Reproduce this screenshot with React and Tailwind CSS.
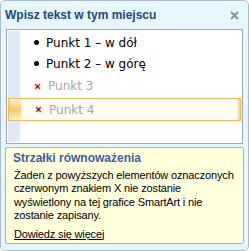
const items = [
  { text: 'Punkt 1 – w dół', on: true, h: 'h-[21px]' },
  { text: 'Punkt 2 – w górę', on: true, h: 'h-[21px]' },
  { text: 'Punkt 3', on: false, h: 'h-[24px]' },
  { text: 'Punkt 4', on: false, selected: true },
];

const rowFont = { fontFamily: '"DejaVu Sans", Verdana, sans-serif' };

const RedX = () => (
  <svg width="7" height="7" viewBox="0 0 7 7" className="shrink-0">
    <path d="M1 1L6 6M6 1L1 6" stroke="#d23a3a" strokeWidth="1.6" />
    <rect x="2.5" y="2.5" width="2" height="2" fill="#7a1010" />
  </svg>
);

const Row = ({ item }) => {
  const bullet = item.on ? (
    <span className="w-[5px] h-[5px] rounded-full bg-black shrink-0" />
  ) : (
    <RedX />
  );

  if (item.selected) {
    return (
      <div className="flex h-[23px] border border-[#f6b95a] bg-[#fffdf4]">
        <div className="w-[12px] bg-linear-to-b from-[#fff2cf] via-[#fdc864] to-[#fff2cf]" />
        <div className="flex-1 flex items-center gap-[7px] pl-[14px]">
          {bullet}
          <span className="text-[12px] whitespace-nowrap text-[#a8a8a8]" style={rowFont}>
            {item.text}
          </span>
        </div>
        <div className="w-[3px] bg-linear-to-r from-[#fffdf4] to-[#fbc46a]" />
      </div>
    );
  }

  return (
    <div className={`flex items-center gap-[7px] pl-[26px] ${item.h}`}>
      {bullet}
      <span
        className={`text-[12px] whitespace-nowrap ${item.on ? 'text-black' : 'text-[#a8a8a8]'}`}
        style={rowFont}
      >
        {item.text}
      </span>
    </div>
  );
};

export default function App() {
  return (
    <div
      className="w-[249px] h-[251px] bg-[#e6f7fc] border border-[#a9bccd] rounded-[5px] flex flex-col"
      style={{ fontFamily: '"Liberation Sans", Arial, sans-serif' }}
    >
      {/* header */}
      <div className="h-[28px] flex items-center justify-between pl-[4px] pr-[9px]">
        <span className="text-[12px] font-bold text-[#1b4b80]">Wpisz tekst w tym miejscu</span>
        <svg width="9" height="9" viewBox="0 0 9 9">
          <path d="M1 1L8 8M8 1L1 8" stroke="#8a9099" strokeWidth="2" />
        </svg>
      </div>

      {/* text pane */}
      <div className="mx-[5px] h-[115px] border border-[#a7a7a7] bg-white p-px">
        <div className="h-full pt-[1px] bg-[linear-gradient(to_right,#dfe9f7_12px,#ffffff_12px)]">
          {items.map((it) => (
            <Row key={it.text} item={it} />
          ))}
        </div>
      </div>

      {/* info panel */}
      <div className="mx-[4px] mt-[3px] h-[97px] border border-[#93b7de] rounded-[2px] bg-[#ffffde] pl-[7px] pr-[4px] pt-[4px] text-[11px] leading-[13.5px] text-black">
        <div className="font-bold text-[#3d5f9e] text-[12px] mb-[3px]">Strzałki równoważenia</div>
        <p className="pl-px whitespace-nowrap tracking-[-0.15px]">
          Żaden z powyższych elementów oznaczonych
          <br />
          czerwonym znakiem X nie zostanie
          <br />
          wyświetlony na tej grafice SmartArt i nie
          <br />
          zostanie zapisany.
        </p>
        <a className="block mt-[5px] pl-px underline tracking-[-0.15px]">Dowiedz się więcej</a>
      </div>
    </div>
  );
}
